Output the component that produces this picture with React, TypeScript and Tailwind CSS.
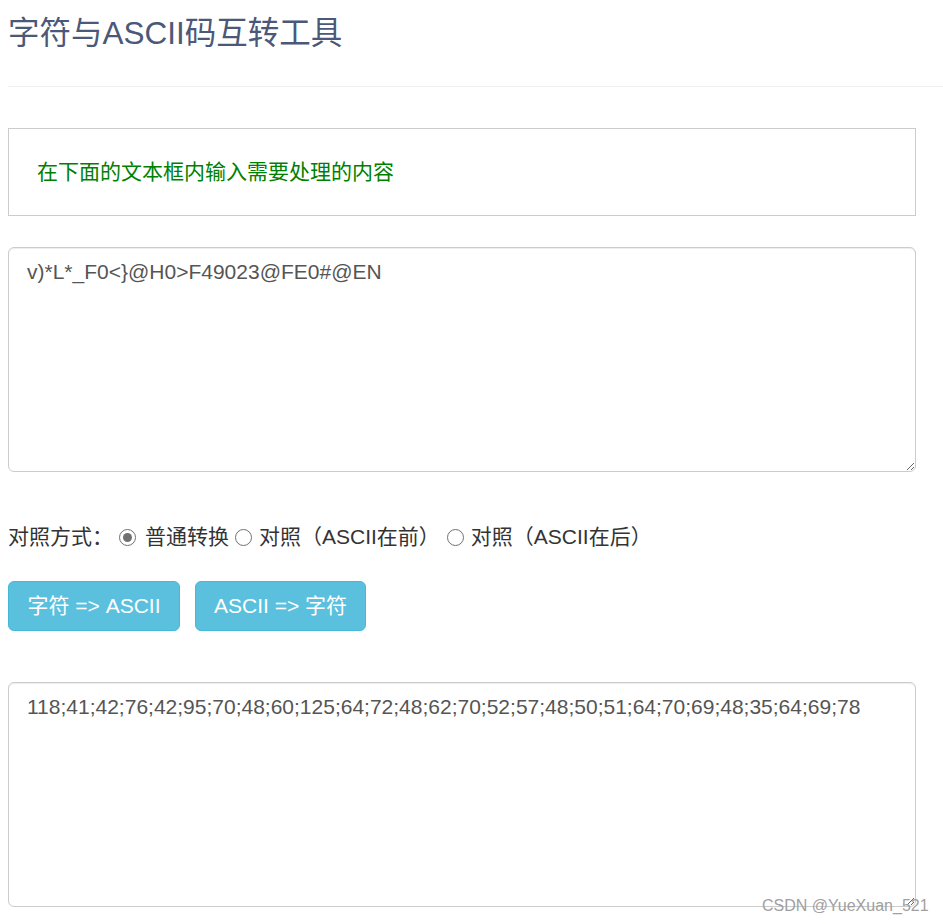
import React, { useState } from "react";

const FONT = { fontFamily: '"Liberation Sans", "Noto Sans CJK SC", sans-serif' };

function Radio({ checked, onClick }: { checked: boolean; onClick: () => void }) {
  return (
    <span
      onClick={onClick}
      className="inline-flex items-center justify-center w-[17px] h-[17px] rounded-full border border-[#707070] bg-white shrink-0 cursor-pointer"
    >
      {checked && <span className="block w-[9px] h-[9px] rounded-full bg-[#707070]" />}
    </span>
  );
}

export default function App() {
  const [mode, setMode] = useState(0);
  return (
    <div className="relative bg-white min-h-[924px] text-[#333] text-[21px] leading-[30px]" style={FONT}>
      <div className="pl-[8px]">
        <h1 className="pt-[16px] text-[31.5px] leading-[35px] text-[#4b5878] font-normal">
          字符与ASCII码互转工具
        </h1>
        <div className="mt-[35px] h-px bg-[#eeeeee]" />

        <div className="mt-[41px] w-[908px] border border-[#cccccc] p-[28px] text-[#008000]">
          在下面的文本框内输入需要处理的内容
        </div>

        <textarea
          className="block mt-[31px] w-[908px] h-[225px] border border-[#cccccc] rounded-[6px] px-[18px] py-[9px] text-[#555] text-[21px] leading-[30px] outline-none shadow-[inset_0_1px_1px_rgba(0,0,0,0.075)]"
          style={FONT}
          defaultValue={"v)*L*_F0<}@H0>F49023@FE0#@EN"}
        />

        <div className="mt-[50px] flex items-center h-[30px]">
          <span>对照方式：</span>
          <span className="ml-[6px] mr-[9px] flex"><Radio checked={mode === 0} onClick={() => setMode(0)} /></span>
          <span>普通转换</span>
          <span className="ml-[6px] mr-[7px] flex"><Radio checked={mode === 1} onClick={() => setMode(1)} /></span>
          <span>对照（ASCII在前）</span>
          <span className="ml-[7px] mr-[7px] flex"><Radio checked={mode === 2} onClick={() => setMode(2)} /></span>
          <span>对照（ASCII在后）</span>
        </div>

        <div className="mt-[29px] flex gap-[15px]">
          <button className="w-[172px] h-[50px] border border-[#46b8da] bg-[#5bc0de] text-white rounded-[6px] text-[21px] leading-[30px]" style={FONT}>
            字符 =&gt; ASCII
          </button>
          <button className="w-[171px] h-[50px] border border-[#46b8da] bg-[#5bc0de] text-white rounded-[6px] text-[21px] leading-[30px]" style={FONT}>
            ASCII =&gt; 字符
          </button>
        </div>

        <textarea
          className="block mt-[51px] w-[908px] h-[225px] border border-[#cccccc] rounded-[6px] px-[18px] py-[9px] text-[#555] text-[21px] leading-[30px] outline-none shadow-[inset_0_1px_1px_rgba(0,0,0,0.075)]"
          style={FONT}
          defaultValue={"118;41;42;76;42;95;70;48;60;125;64;72;48;62;70;52;57;48;50;51;64;70;69;48;35;64;69;78"}
        />
      </div>

      <div className="absolute left-[762px] top-[897px] text-[16px] leading-[18px] text-[#a0a0a0] pointer-events-none" style={FONT}>
        CSDN @YueXuan_521
      </div>
    </div>
  );
}
